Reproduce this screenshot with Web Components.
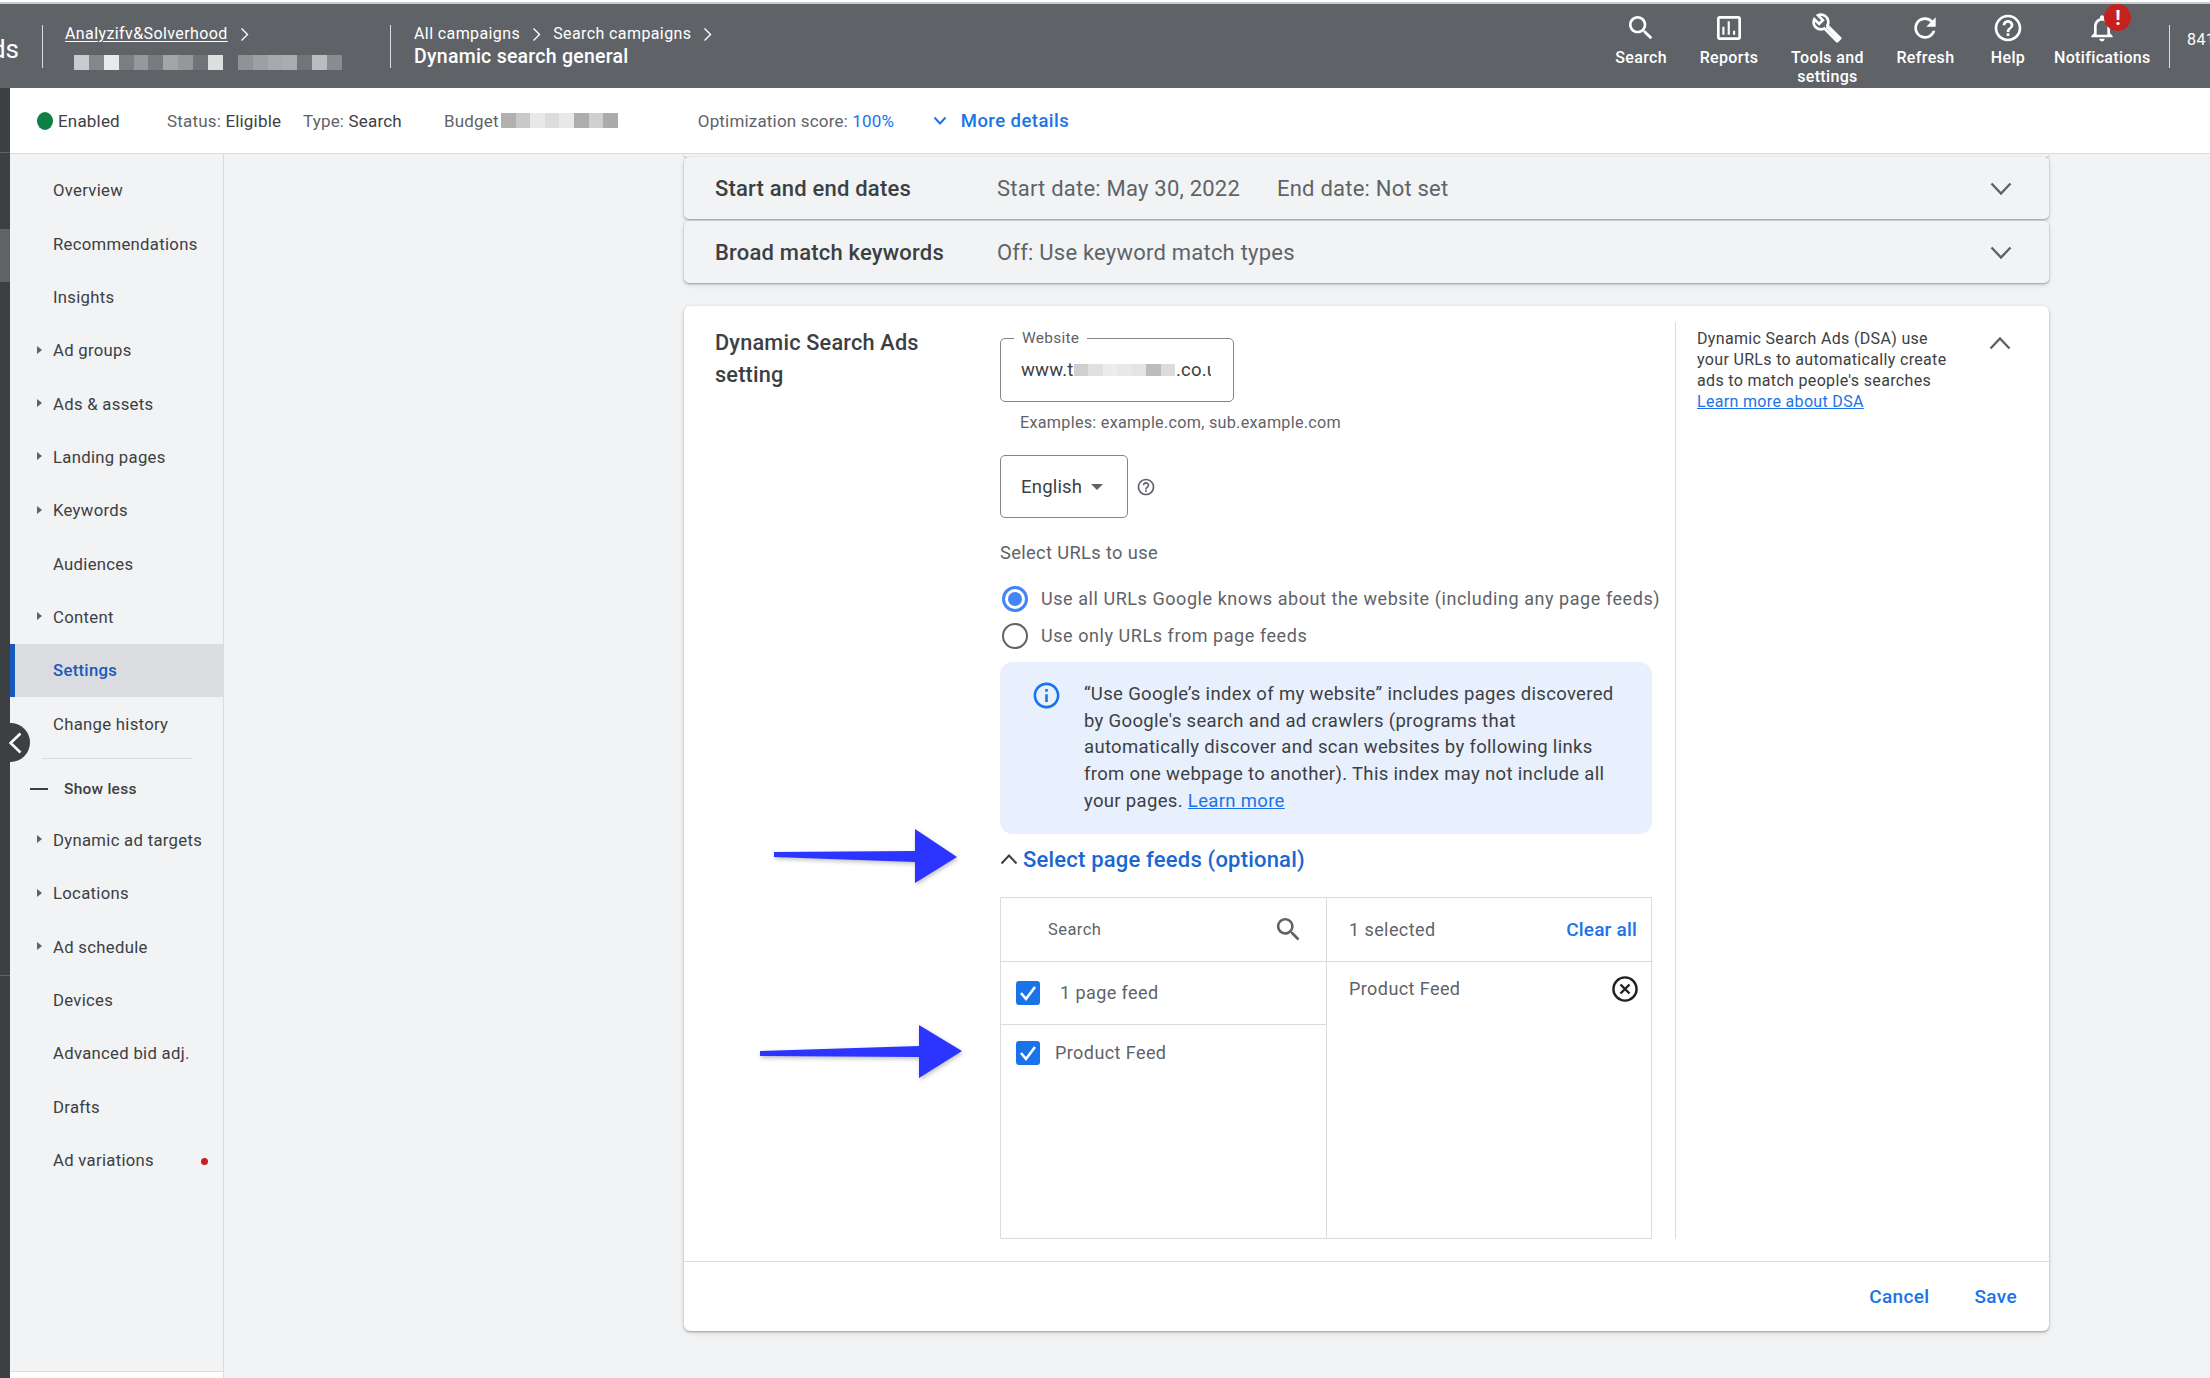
<!DOCTYPE html>
<html>
<head>
<meta charset="utf-8">
<title>Dynamic search general</title>
<style>
html,body{margin:0;padding:0;background:#f1f3f4;}
body{width:2210px;height:1378px;overflow:hidden;position:relative;font-family:Roboto,"Liberation Sans",sans-serif;color:#3c4043;}
</style>
</head>
<body>
<ads-app></ads-app>
<arrow-layer></arrow-layer>

<script>
const icons={
  search:'<path d="M15.5 14h-.79l-.28-.27C15.41 12.59 16 11.11 16 9.5 16 5.91 13.09 3 9.5 3S3 5.91 3 9.5 5.91 16 9.5 16c1.61 0 3.09-.59 4.23-1.57l.27.28v.79l5 4.99L20.49 19l-4.99-5zm-6 0C7.01 14 5 11.99 5 9.5S7.01 5 9.5 5 14 7.01 14 9.5 11.99 14 9.5 14z"/>',
  reports:'<path d="M19 3H5c-1.1 0-2 .9-2 2v14c0 1.1.9 2 2 2h14c1.1 0 2-.9 2-2V5c0-1.1-.9-2-2-2zm0 16H5V5h14v14zM7 11h1.6v6H7zm4-4h1.6v10H11zm4 7h1.6v3H15z"/>',
  tools:'<path d="M22.61 18.99l-9.08-9.08c.93-2.34.45-5.1-1.44-7C9.79.61 6.21.4 3.66 2.26L7.5 6.11 6.08 7.52 2.25 3.69C.39 6.23.6 9.82 2.9 12.11c1.86 1.86 4.57 2.35 6.89 1.48l9.11 9.11c.39.39 1.02.39 1.41 0l2.3-2.3c.4-.38.4-1.01 0-1.41zm-3 1.6l-9.46-9.46c-.61.45-1.29.72-2 .82-1.36.2-2.79-.21-3.83-1.25C3.37 9.76 2.93 8.5 3 7.26l3.09 3.09 4.24-4.24-3.09-3.09c1.24-.07 2.49.37 3.44 1.31 1.08 1.08 1.49 2.57 1.24 3.96-.12.71-.42 1.37-.88 1.96l9.45 9.45-.88.88z"/><path d="M11 11.6l1-1 9.6 9.6-1.4 1.4z"/>',
  refresh:'<path d="M17.65 6.35C16.2 4.9 14.21 4 12 4c-4.42 0-7.99 3.58-7.99 8s3.57 8 7.99 8c3.73 0 6.84-2.55 7.73-6h-2.08c-.82 2.33-3.04 4-5.65 4-3.31 0-6-2.69-6-6s2.69-6 6-6c1.66 0 3.14.69 4.22 1.78L13 11h7V4l-2.35 2.35z"/>',
  help:'<path d="M11 18h2v-2h-2v2zm1-16C6.48 2 2 6.48 2 12s4.48 10 10 10 10-4.48 10-10S17.52 2 12 2zm0 18c-4.41 0-8-3.59-8-8s3.59-8 8-8 8 3.59 8 8-3.59 8-8 8zm0-14c-2.21 0-4 1.79-4 4h2c0-1.1.9-2 2-2s2 .9 2 2c0 2-3 1.75-3 5h2c0-2.25 3-2.5 3-5 0-2.21-1.79-4-4-4z"/>',
  bell:'<path d="M12 22c1.1 0 2-.9 2-2h-4c0 1.1.9 2 2 2zm6-6v-5c0-3.07-1.63-5.64-4.5-6.32V4c0-.83-.67-1.5-1.5-1.5s-1.5.67-1.5 1.5v.68C7.64 5.36 6 7.92 6 11v5l-2 2v1h16v-1l-2-2zm-2 1H8v-6c0-2.48 1.51-4.5 4-4.5s4 2.02 4 4.5v6z"/>',
  info:'<path d="M11 7h2v2h-2zm0 4h2v6h-2zm1-9C6.48 2 2 6.48 2 12s4.48 10 10 10 10-4.48 10-10S17.52 2 12 2zm0 18c-4.41 0-8-3.59-8-8s3.59-8 8-8 8 3.59 8 8-3.59 8-8 8z"/>'
};
const svg=(name,size,color)=>`<svg width="${size}" height="${size}" viewBox="0 0 24 24" fill="${color}" style="display:block">${icons[name]}</svg>`;
const chevron=(dir,w,h,color,sw)=>{
  const pts={down:`1.5,1.5 ${w/2},${h-1.5} ${w-1.5},1.5`,up:`1.5,${h-1.5} ${w/2},1.5 ${w-1.5},${h-1.5}`,right:`1.5,1.5 ${w-1.5},${h/2} 1.5,${h-1.5}`,left:`${w-1.5},1.5 1.5,${h/2} ${w-1.5},${h-1.5}`}[dir];
  return `<svg width="${w}" height="${h}" viewBox="0 0 ${w} ${h}" style="display:block;flex:none"><polyline points="${pts}" fill="none" stroke="${color}" stroke-width="${sw}"/></svg>`;
};

// base class: open shadow root from a markup string
class Shadowed extends HTMLElement{
  constructor(){
    super();
    this.attachShadow({mode:'open'});
    this.shadowRoot.innerHTML=this.markup();
  }
  markup(){return '';}
}

class PixelBlur extends Shadowed{
  markup(){return `<style>
:host{display:inline-flex;flex:none;}
i{display:block;height:var(--h,15px);width:var(--w,14.6px);}
</style>`;}
  connectedCallback(){
    if(this.shadowRoot.querySelector('i'))return;
    (this.getAttribute('colors')||'').split(' ').forEach(c=>{
      const b=document.createElement('i');
      b.style.background=c;
      this.shadowRoot.appendChild(b);
    });
  }
}
customElements.define('pixel-blur',PixelBlur);

class HeaderAction extends Shadowed{
  markup(){return `<style>
:host{display:flex;flex-direction:column;align-items:center;padding:0 16.3px;position:relative;}
.ic{height:32px;display:flex;align-items:center;justify-content:center;margin-top:8px;}
.lb{margin-top:5px;text-align:center;font-size:16px;font-weight:500;line-height:18.5px;letter-spacing:.35px;color:#fff;white-space:pre-line;}
.badge{position:absolute;left:50%;margin-left:2px;top:0;width:27px;height:27px;border-radius:50%;background:#c5221f;color:#fff;font-size:20px;font-weight:700;display:flex;align-items:center;justify-content:center;}
</style>
<div class="ic" id="ic"></div><div class="lb"><slot></slot></div>`;}
  connectedCallback(){
    this.shadowRoot.getElementById('ic').innerHTML=svg(this.getAttribute('icon'),32,'#fff');
    if(this.hasAttribute('badge')&&!this.shadowRoot.querySelector('.badge')){
      const b=document.createElement('div');
      b.className='badge';b.textContent='!';
      this.shadowRoot.appendChild(b);
    }
  }
}
customElements.define('header-action',HeaderAction);

class AdsHeader extends Shadowed{
  markup(){return `<style>
:host{display:flex;height:84px;background:#5f6368;color:#fff;overflow:hidden;align-items:stretch;flex:none;}
.logo{width:42px;font-size:26px;line-height:1;display:flex;align-items:center;justify-content:flex-end;overflow:hidden;box-sizing:border-box;white-space:nowrap;}
.logo span{margin-right:23px;padding-top:6px;}
.sep{width:1px;background:#dadce0;height:43px;align-self:center;flex:none;}
.acct{width:347px;padding:20px 0 0 22px;box-sizing:border-box;flex:none;}
.crumb{font-size:16px;line-height:20px;letter-spacing:.4px;display:flex;align-items:center;gap:12px;color:#fff;white-space:nowrap;}
.acct u{text-decoration:underline;text-underline-offset:2px;text-decoration-thickness:1px;}
.blur{margin-top:11px;display:flex;padding-left:9px;--w:14.9px;}
.camp{padding:20px 0 0 23px;flex:1;}
.title{font-size:19.5px;font-weight:500;letter-spacing:.25px;line-height:24px;margin-top:1px;white-space:nowrap;}
.acts{display:flex;align-items:flex-start;margin-right:2px;}
.tail{font-size:16px;padding:26px 0 0 17px;white-space:nowrap;width:23px;overflow:hidden;letter-spacing:.4px;}
</style>
<div class="logo"><span>Ads</span></div><div class="sep"></div>
<div class="acct">
  <div class="crumb"><u>Analyzifv&amp;Solverhood</u>${chevron('right',9,15,'#fff',1.4)}</div>
  <pixel-blur class="blur" colors="#c8cacd #85878a #e8e9ea #7c7e81 #96989b #797b7e #a3a5a7 #95979a #717376 #dddee0 #5f6368 #909295 #9d9fa2 #a6a8ab #aaacaf #727477 #bbbcbf #8a8c90"></pixel-blur>
</div>
<div class="sep"></div>
<div class="camp">
  <div class="crumb">All campaigns ${chevron('right',9,15,'#fff',1.4)} Search campaigns ${chevron('right',9,15,'#fff',1.4)}</div>
  <div class="title">Dynamic search general</div>
</div>
<div class="acts"><slot></slot></div>
<div class="sep"></div>
<div class="tail">841</div>`;}
}
customElements.define('ads-header',AdsHeader);

class AdsSubbar extends Shadowed{
  markup(){return `<style>
:host{display:flex;align-items:center;height:65px;background:#fff;border-bottom:1px solid #dadce0;font-size:17px;letter-spacing:.18px;color:#5f6368;white-space:nowrap;flex:none;}
b{font-weight:400;color:#3c4043;}
.dot{width:16px;height:18px;border-radius:50%;background:#0d8043;margin-left:27px;}
.en{margin-left:5px;color:#3c4043;width:109px;}
.st{width:136px;}
.ty{width:141px;}
.bu{width:57px;}
.op{margin-left:80px;width:237px;}
.op span{color:#1a73e8;}
.more{margin-left:-2px;color:#1a73e8;font-size:18.5px;font-weight:500;letter-spacing:.45px;display:flex;gap:14px;align-items:center;}
</style>
<div class="dot"></div><div class="en">Enabled</div>
<div class="st">Status: <b>Eligible</b></div>
<div class="ty">Type: <b>Search</b></div>
<div class="bu">Budget</div>
<pixel-blur colors="#b0b0b0 #c9c9c9 #e8e8e8 #dcdcdc #e8e8e8 #adadad #cfcfcf #ababab"></pixel-blur>
<div class="op">Optimization score: <span>100%</span></div>
<div class="more">${chevron('down',14,9,'#1a73e8',2)}More details</div>`;}
}
customElements.define('ads-subbar',AdsSubbar);

class NavItem extends Shadowed{
  markup(){return `<style>
:host{display:flex;align-items:center;height:53.35px;padding-left:43px;font-size:16.7px;letter-spacing:.3px;color:#3c4043;position:relative;white-space:nowrap;box-sizing:border-box;}
:host([active]){background:#dadce0;color:#185abc;font-weight:500;border-left:5px solid #185abc;padding-left:38px;}
.tri{position:absolute;left:27px;top:50%;margin-top:-5px;width:0;height:0;border-left:5px solid #5f6368;border-top:4px solid transparent;border-bottom:4px solid transparent;display:none;}
:host([arrow]) .tri{display:block;}
.dot{position:absolute;left:191px;top:50%;margin-top:-3px;width:7px;height:7px;border-radius:50%;background:#c5221f;display:none;}
:host([dot]) .dot{display:block;}
</style><span class="tri"></span><slot></slot><span class="dot"></span>`;}
}
customElements.define('nav-item',NavItem);

class AdsSidebar extends Shadowed{
  markup(){return `<style>
:host{display:flex;flex-direction:column;width:214px;box-sizing:border-box;border-right:1px solid #dadce0;background:#f1f3f4;position:relative;flex:none;height:100%;}
.list{padding-top:10px;flex:1;}
.foot{height:6px;background:#fff;border-top:1px solid #dadce0;flex:none;}
.collapse{position:absolute;left:-19.5px;top:569px;width:39px;height:39px;border-radius:50%;background:#3c4043;display:flex;align-items:center;justify-content:flex-end;padding-right:8px;box-sizing:border-box;}
</style>
<div class="list"><slot></slot></div><div class="foot"></div>
<div class="collapse">${chevron('left',13,22,'#fff',2.6)}</div>`;}
}
customElements.define('ads-sidebar',AdsSidebar);

class NavDivider extends Shadowed{
  markup(){return `<style>
:host{display:block;padding-top:7px;height:56px;position:relative;font-size:15.5px;font-weight:500;letter-spacing:.25px;color:#3c4043;}
.rule{height:1px;background:#dadce0;margin:0 31px 0 32px;}
.row{display:flex;align-items:center;height:48px;margin-top:6px;padding-left:54px;position:relative;white-space:nowrap;}
.dash{position:absolute;left:20px;top:23px;width:18px;height:2px;background:#3c4043;}
</style>
<div class="rule"></div><div class="row"><span class="dash"></span><slot></slot></div>`;}
}
customElements.define('nav-divider',NavDivider);

class SettingRow extends Shadowed{
  markup(){return `<style>
:host{display:grid;grid-template-columns:282px 1fr 64px;align-items:center;background:#f1f3f4;border-radius:5px;box-shadow:0 1px 2px rgba(60,64,67,.4),0 2px 5px rgba(60,64,67,.15);padding-left:31px;box-sizing:border-box;height:62px;margin-bottom:2px;}
.t{font-size:22px;font-weight:500;letter-spacing:.2px;color:#3c4043;white-space:nowrap;}
.s{font-size:22px;color:#5f6368;letter-spacing:.22px;white-space:nowrap;}
.c{justify-self:start;padding-left:5px;}
::slotted(span){margin-right:37px;}
</style>
<div class="t"><slot name="title"></slot></div><div class="s"><slot></slot></div>
<div class="c">${chevron('down',22,13,'#5f6368',2.4)}</div>`;}
}
customElements.define('setting-row',SettingRow);

class OutlinedBox extends Shadowed{
  markup(){return `<style>
:host{display:flex;align-items:center;box-sizing:border-box;border:1.5px solid #80868b;border-radius:5px;padding-left:20px;position:relative;font-size:18.5px;letter-spacing:.2px;color:#3c4043;background:#fff;}
.lbl{position:absolute;left:13px;top:-11px;background:#fff;padding:0 8px;font-size:15.5px;letter-spacing:.25px;color:#5f6368;line-height:20px;white-space:nowrap;}
</style>
<span class="lbl" id="l"></span><slot></slot>`;}
  connectedCallback(){
    const l=this.shadowRoot.getElementById('l');
    if(!l)return;
    if(this.getAttribute('label'))l.textContent=this.getAttribute('label');else l.remove();
  }
}
customElements.define('outlined-box',OutlinedBox);

class RadioRow extends Shadowed{
  markup(){return `<style>
:host{display:flex;align-items:center;height:37px;gap:13px;padding-left:2px;font-size:18px;letter-spacing:.56px;color:#5f6368;white-space:nowrap;}
.r{width:26px;height:26px;border-radius:50%;box-sizing:border-box;border:2.5px solid #5f6368;flex:none;display:flex;align-items:center;justify-content:center;}
:host([checked]) .r{border:3px solid #4285f4;}
:host([checked]) .r::after{content:"";width:14px;height:14px;border-radius:50%;background:#4285f4;}
</style><span class="r"></span><slot></slot>`;}
}
customElements.define('radio-row',RadioRow);

class InfoBox extends Shadowed{
  markup(){return `<style>
:host{display:flex;background:#e8f0fe;border-radius:13px;padding:19px 30px 19px 33px;box-sizing:border-box;width:652px;font-size:18.5px;line-height:26.7px;letter-spacing:.33px;color:#3c4043;}
.ic{flex:none;width:51px;margin-top:-1px;}
::slotted(a){color:#1a73e8;}
</style>
<div class="ic">${svg('info',31,'#1a73e8').replace('display:block','display:block;margin-left:-2px')}</div><div><slot></slot></div>`;}
}
customElements.define('info-box',InfoBox);

class BlueCheck extends Shadowed{
  markup(){return `<style>
:host{display:block;width:24px;height:24px;border-radius:3px;background:#1a73e8;flex:none;}
svg{display:block;}
</style><svg width="24" height="24" viewBox="0 0 24 24"><polyline points="5,12 10,18 19,6" fill="none" stroke="#fff" stroke-width="2.6"/></svg>`;}
}
customElements.define('blue-check',BlueCheck);

class FeedPicker extends Shadowed{
  markup(){return `<style>
:host{display:grid;grid-template-columns:326px 326px;grid-template-rows:64px 1fr;height:342px;box-sizing:border-box;border:1.5px solid #dadce0;width:652px;font-size:18px;letter-spacing:.42px;color:#5f6368;}
.head{display:flex;align-items:center;border-bottom:1.5px solid #dadce0;box-sizing:border-box;white-space:nowrap;}
.l{padding-left:47px;font-size:16.5px;border-right:1px solid #dadce0;padding-right:22px;justify-content:space-between;}
.r{padding-left:22px;justify-content:space-between;padding-right:16px;}
.clear{color:#1a73e8;font-weight:500;font-size:19px;letter-spacing:.2px;}
.lc{border-right:1px solid #dadce0;}
.row{display:flex;align-items:center;height:63px;padding-left:15px;box-sizing:border-box;}
.row.a{border-bottom:1.5px solid #dadce0;gap:20px;}
.row.b{gap:15px;align-items:flex-start;padding-top:16px;height:auto;}
.row.b span{margin-top:1px;}
.sel{display:flex;justify-content:space-between;align-items:center;align-self:start;padding:13px 14px 0 22px;}
</style>
<div class="head l"><span>Search</span>${svg('search',31,'#5f6368')}</div>
<div class="head r"><span>1 selected</span><span class="clear">Clear all</span></div>
<div class="lc">
  <div class="row a"><blue-check></blue-check><span>1 page feed</span></div>
  <div class="row b"><blue-check></blue-check><span>Product Feed</span></div>
</div>
<div class="sel"><span>Product Feed</span>
  <svg width="28" height="28" viewBox="0 0 28 28" style="display:block"><circle cx="14" cy="14" r="11.6" fill="none" stroke="#202124" stroke-width="2.4"/><path d="M9.5 9.5l9 9M18.5 9.5l-9 9" stroke="#202124" stroke-width="2.4"/></svg>
</div>`;}
}
customElements.define('feed-picker',FeedPicker);

class DsaCard extends Shadowed{
  markup(){return `<style>
:host{display:block;background:#fff;border-radius:6px;box-shadow:0 1px 2px rgba(60,64,67,.4),0 2px 5px rgba(60,64,67,.15);margin-top:23px;}
.body{display:grid;grid-template-columns:285px 652px 1fr;padding:16px 0 22px 31px;column-gap:0;}
.title{font-size:21.7px;font-weight:500;letter-spacing:.2px;line-height:32px;padding-top:5px;color:#3c4043;}
.form{padding-top:16px;display:flex;flex-direction:column;align-items:flex-start;}
.aside{margin-left:23px;border-left:1.5px solid #dadce0;padding:0 0 0 21px;position:relative;font-size:16px;line-height:21px;letter-spacing:.33px;color:#3c4043;display:flex;}
.aside p{margin:6px 0 0;width:292px;white-space:nowrap;}
.aside a{color:#1a73e8;}
.chev{margin:15px 0 0 0;}
.web{width:234px;height:64px;}
.val{display:flex;align-items:center;width:190px;overflow:hidden;white-space:nowrap;}
.val pixel-blur{--w:14.5px;--h:12px;margin-right:1px;}
.ex{margin:10px 0 0 20px;font-size:16.2px;line-height:22px;letter-spacing:.27px;color:#5f6368;}
.lang{margin-top:21px;display:flex;align-items:center;gap:8px;}
.drop{width:128px;height:63px;gap:9px;}
.tri{width:0;height:0;border-top:6px solid #5f6368;border-left:6.5px solid transparent;border-right:6.5px solid transparent;}
.urls{margin-top:23px;font-size:18.3px;line-height:24px;letter-spacing:.35px;color:#5f6368;}
.radios{margin-top:15px;}
info-box{margin-top:8px;}
.feeds{margin-top:11px;height:30px;display:flex;align-items:center;gap:5px;color:#1967d2;font-size:22px;font-weight:500;letter-spacing:.2px;white-space:nowrap;}
feed-picker{margin-top:22px;}
.foot{border-top:1.5px solid #dadce0;height:70px;box-sizing:border-box;display:flex;align-items:center;justify-content:flex-end;gap:45px;padding:0 32px 0 0;color:#1a73e8;font-size:19px;font-weight:500;letter-spacing:.35px;}
</style>
<div class="body">
  <div class="title">Dynamic Search Ads<br>setting</div>
  <div class="form">
    <outlined-box class="web" label="Website"><span class="val">www.t<pixel-blur colors="#cfcfcf #e0e0e0 #ececec #e8e8e8 #e4e4e4 #bcbcbc #dcdcdc"></pixel-blur>.co.uk</span></outlined-box>
    <div class="ex">Examples: example.com, sub.example.com</div>
    <div class="lang"><outlined-box class="drop">English<span class="tri"></span></outlined-box>${svg('help',20,'#5f6368')}</div>
    <div class="urls">Select URLs to use</div>
    <div class="radios">
      <radio-row checked>Use all URLs Google knows about the website (including any page feeds)</radio-row>
      <radio-row>Use only URLs from page feeds</radio-row>
    </div>
    <info-box>“Use Google’s index of my website” includes pages discovered by Google's search and ad crawlers (programs that automatically discover and scan websites by following links from one webpage to another). This index may not include all your pages. <a href="#">Learn more</a></info-box>
    <div class="feeds">${chevron('up',18,11,'#3c4043',2)}Select page feeds (optional)</div>
    <feed-picker></feed-picker>
  </div>
  <div class="aside">
    <p>Dynamic Search Ads (DSA) use<br>your URLs to automatically create<br>ads to match people's searches<br><a href="#">Learn more about DSA</a></p>
    <div class="chev">${chevron('up',22,13,'#5f6368',2.4)}</div>
  </div>
</div>
<div class="foot"><span>Cancel</span><span>Save</span></div>`;}
}
customElements.define('dsa-card',DsaCard);

class ArrowLayer extends Shadowed{
  markup(){return `<style>
:host{position:absolute;left:0;top:0;width:2210px;height:1378px;pointer-events:none;}
svg{display:block;filter:drop-shadow(1px 2px 2px rgba(0,0,0,.25));}
</style>
<svg width="2210" height="1378" viewBox="0 0 2210 1378">
<polygon fill="#2b35ff" points="774,852 915,851 915,829 957,857 915,883 915,862 774,857"/>
<polygon fill="#2b35ff" points="760,1051 919,1046 919,1025 962,1051 919,1078 919,1057 760,1056"/>
</svg>`;}
}
customElements.define('arrow-layer',ArrowLayer);

class AdsApp extends Shadowed{
  markup(){return `<style>
:host{display:flex;flex-direction:column;width:2210px;height:1378px;overflow:hidden;}
.top{height:2px;background:#fff;flex:none;}
.top2{height:2px;background:#c8cacc;flex:none;}
.under{display:flex;flex:1;min-height:0;}
.strip{width:10px;flex:none;background:#3c4043;display:flex;flex-direction:column;}
.strip i{display:block;}
.rest{flex:1;display:flex;flex-direction:column;min-width:0;}
.content{flex:1;display:flex;min-height:0;}
.main{flex:1;padding:0 0 0 460px;overflow:hidden;}
.col{width:1365px;}
.stub{height:3px;background:#f1f3f4;border-radius:0 0 5px 5px;box-shadow:0 1px 2px rgba(60,64,67,.4);}
.more{margin:43px 0 0 43px;font-size:21px;line-height:25px;color:#9aa0a6;}
</style>
<div class="top"></div><div class="top2"></div>
<ads-header>
  <header-action icon="search">Search</header-action>
  <header-action icon="reports">Reports</header-action>
  <header-action icon="tools">Tools and
settings</header-action>
  <header-action icon="refresh">Refresh</header-action>
  <header-action icon="help" style="padding:0 12.5px 0 20.1px">Help</header-action>
  <header-action icon="bell" badge>Notifications</header-action>
</ads-header>
<div class="under">
  <div class="strip"><i style="height:64px"></i><i style="height:1px;background:#5f6368"></i><i style="height:76px"></i><i style="height:53px;background:#5f6368"></i><i style="height:693px"></i><i style="height:1px;background:#5f6368"></i></div>
  <div class="rest">
    <ads-subbar></ads-subbar>
    <div class="content">
      <ads-sidebar>
        <nav-item>Overview</nav-item>
        <nav-item>Recommendations</nav-item>
        <nav-item>Insights</nav-item>
        <nav-item arrow>Ad groups</nav-item>
        <nav-item arrow>Ads &amp; assets</nav-item>
        <nav-item arrow>Landing pages</nav-item>
        <nav-item arrow>Keywords</nav-item>
        <nav-item>Audiences</nav-item>
        <nav-item arrow>Content</nav-item>
        <nav-item active>Settings</nav-item>
        <nav-item>Change history</nav-item>
        <nav-divider>Show less</nav-divider>
        <nav-item arrow>Dynamic ad targets</nav-item>
        <nav-item arrow>Locations</nav-item>
        <nav-item arrow>Ad schedule</nav-item>
        <nav-item>Devices</nav-item>
        <nav-item>Advanced bid adj.</nav-item>
        <nav-item>Drafts</nav-item>
        <nav-item dot>Ad variations</nav-item>
      </ads-sidebar>
      <div class="main"><div class="col">
        <div class="stub"></div>
        <setting-row><span slot="title">Start and end dates</span><span>Start date: May 30, 2022</span><span>End date: Not set</span></setting-row>
        <setting-row><span slot="title">Broad match keywords</span>Off: Use keyword match types</setting-row>
        <dsa-card></dsa-card>
        <div class="more">Additional settings</div>
      </div></div>
    </div>
  </div>
</div>`;}
}
customElements.define('ads-app',AdsApp);
</script>
</body>
</html>
